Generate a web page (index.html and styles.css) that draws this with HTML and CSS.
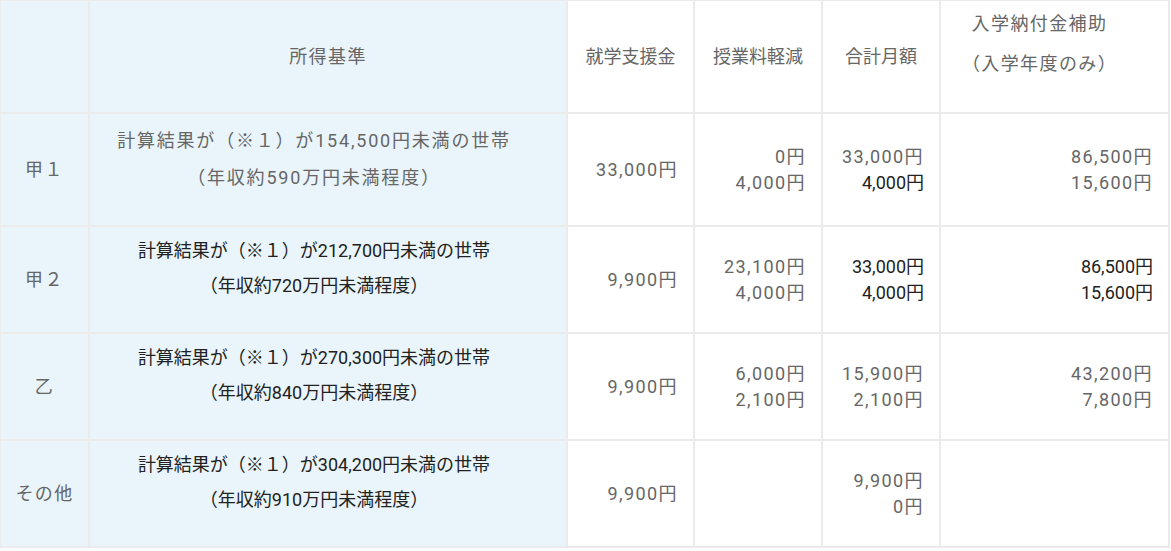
FILE: index.html
```html
<!DOCTYPE html>
<html lang="ja">
<head>
<meta charset="utf-8">
<title>就学支援金</title>
<link rel="stylesheet" href="styles.css">
</head>
<body>
<table class="aid">
  <colgroup>
    <col class="c-rank">
    <col class="c-income">
    <col class="c-grant">
    <col class="c-fee">
    <col class="c-total">
    <col class="c-entry">
  </colgroup>
  <thead>
    <tr class="r-head">
      <th class="blue"></th>
      <th class="blue">所得基準</th>
      <th class="plain">就学支援金</th>
      <th class="plain">授業料軽減</th>
      <th class="plain">合計月額</th>
      <th class="entry"><p class="multi">入学納付金補助<br>（入学年度のみ）</p></th>
    </tr>
  </thead>
  <tbody>
    <tr class="r-first">
      <td class="blue rank">甲１</td>
      <td class="blue income"><p class="lines lines-a">計算結果が（※１）が154,500円未満の世帯<br>（年収約590万円未満程度）</p></td>
      <td class="num">33,000円</td>
      <td class="num"><p class="pair">0円<br>4,000円</p></td>
      <td class="num"><p class="pair">33,000円<br><span class="dark">4,000円</span></p></td>
      <td class="num"><p class="pair">86,500円<br>15,600円</p></td>
    </tr>
    <tr class="r-rest">
      <td class="blue rank">甲２</td>
      <td class="blue income dark"><p class="lines">計算結果が（※１）が212,700円未満の世帯<br>（年収約720万円未満程度）</p></td>
      <td class="num">9,900円</td>
      <td class="num"><p class="pair">23,100円<br>4,000円</p></td>
      <td class="num dark"><p class="pair">33,000円<br>4,000円</p></td>
      <td class="num dark"><p class="pair">86,500円<br>15,600円</p></td>
    </tr>
    <tr class="r-rest">
      <td class="blue rank">乙</td>
      <td class="blue income dark"><p class="lines">計算結果が（※１）が270,300円未満の世帯<br>（年収約840万円未満程度）</p></td>
      <td class="num">9,900円</td>
      <td class="num"><p class="pair">6,000円<br>2,100円</p></td>
      <td class="num"><p class="pair">15,900円<br>2,100円</p></td>
      <td class="num"><p class="pair">43,200円<br>7,800円</p></td>
    </tr>
    <tr class="r-rest">
      <td class="blue rank">その他</td>
      <td class="blue income dark"><p class="lines">計算結果が（※１）が304,200円未満の世帯<br>（年収約910万円未満程度）</p></td>
      <td class="num">9,900円</td>
      <td class="num"></td>
      <td class="num"><p class="pair">9,900円<br>0円</p></td>
      <td class="num"></td>
    </tr>
  </tbody>
</table>
</body>
</html>
```

FILE: styles.css
```css
html, body {
  margin: 0;
  padding: 0;
  background: #ffffff;
}

.aid {
  border-collapse: separate;
  border-spacing: 0;
  table-layout: fixed;
  width: 1170px;
  border-top: 1px solid #ebebeb;
  border-left: 1px solid #ebebeb;
  font-family: Roboto, "Noto Sans CJK JP", sans-serif;
  font-size: 18px;
  letter-spacing: 1.4px;
  color: #666666;
}

.c-rank { width: 89px; }
.c-income { width: 478px; }
.c-grant { width: 127px; }
.c-fee { width: 128px; }
.c-total { width: 118px; }
.c-entry { width: 229px; }

.aid th,
.aid td {
  border-right: 2px solid #ebebeb;
  border-bottom: 2px solid #ebebeb;
  padding: 0;
  vertical-align: middle;
  font-weight: normal;
  text-align: center;
  line-height: 26px;
}

.r-head { height: 113px; }
.r-first { height: 113px; }
.r-rest { height: 107px; }

.blue { background: #e9f5fa; }

.aid th.plain {
  letter-spacing: 0;
}

.aid th.entry {
  padding-right: 30px;
}

.multi {
  margin: 0;
  line-height: 40px;
  padding-bottom: 25px;
}

.rank {
  padding: 0;
}

.aid td.income {
  padding-right: 28px;
}

.lines {
  margin: 0;
  line-height: 35px;
  padding-bottom: 24px;
}

.lines-a {
  line-height: 37px;
  padding-bottom: 22px;
  letter-spacing: 1.8px;
}

.aid td.num {
  text-align: right;
  padding-right: 15px;
}

.pair {
  margin: 0;
  line-height: 26px;
}

.dark {
  color: #222222;
  letter-spacing: 0;
}
```
